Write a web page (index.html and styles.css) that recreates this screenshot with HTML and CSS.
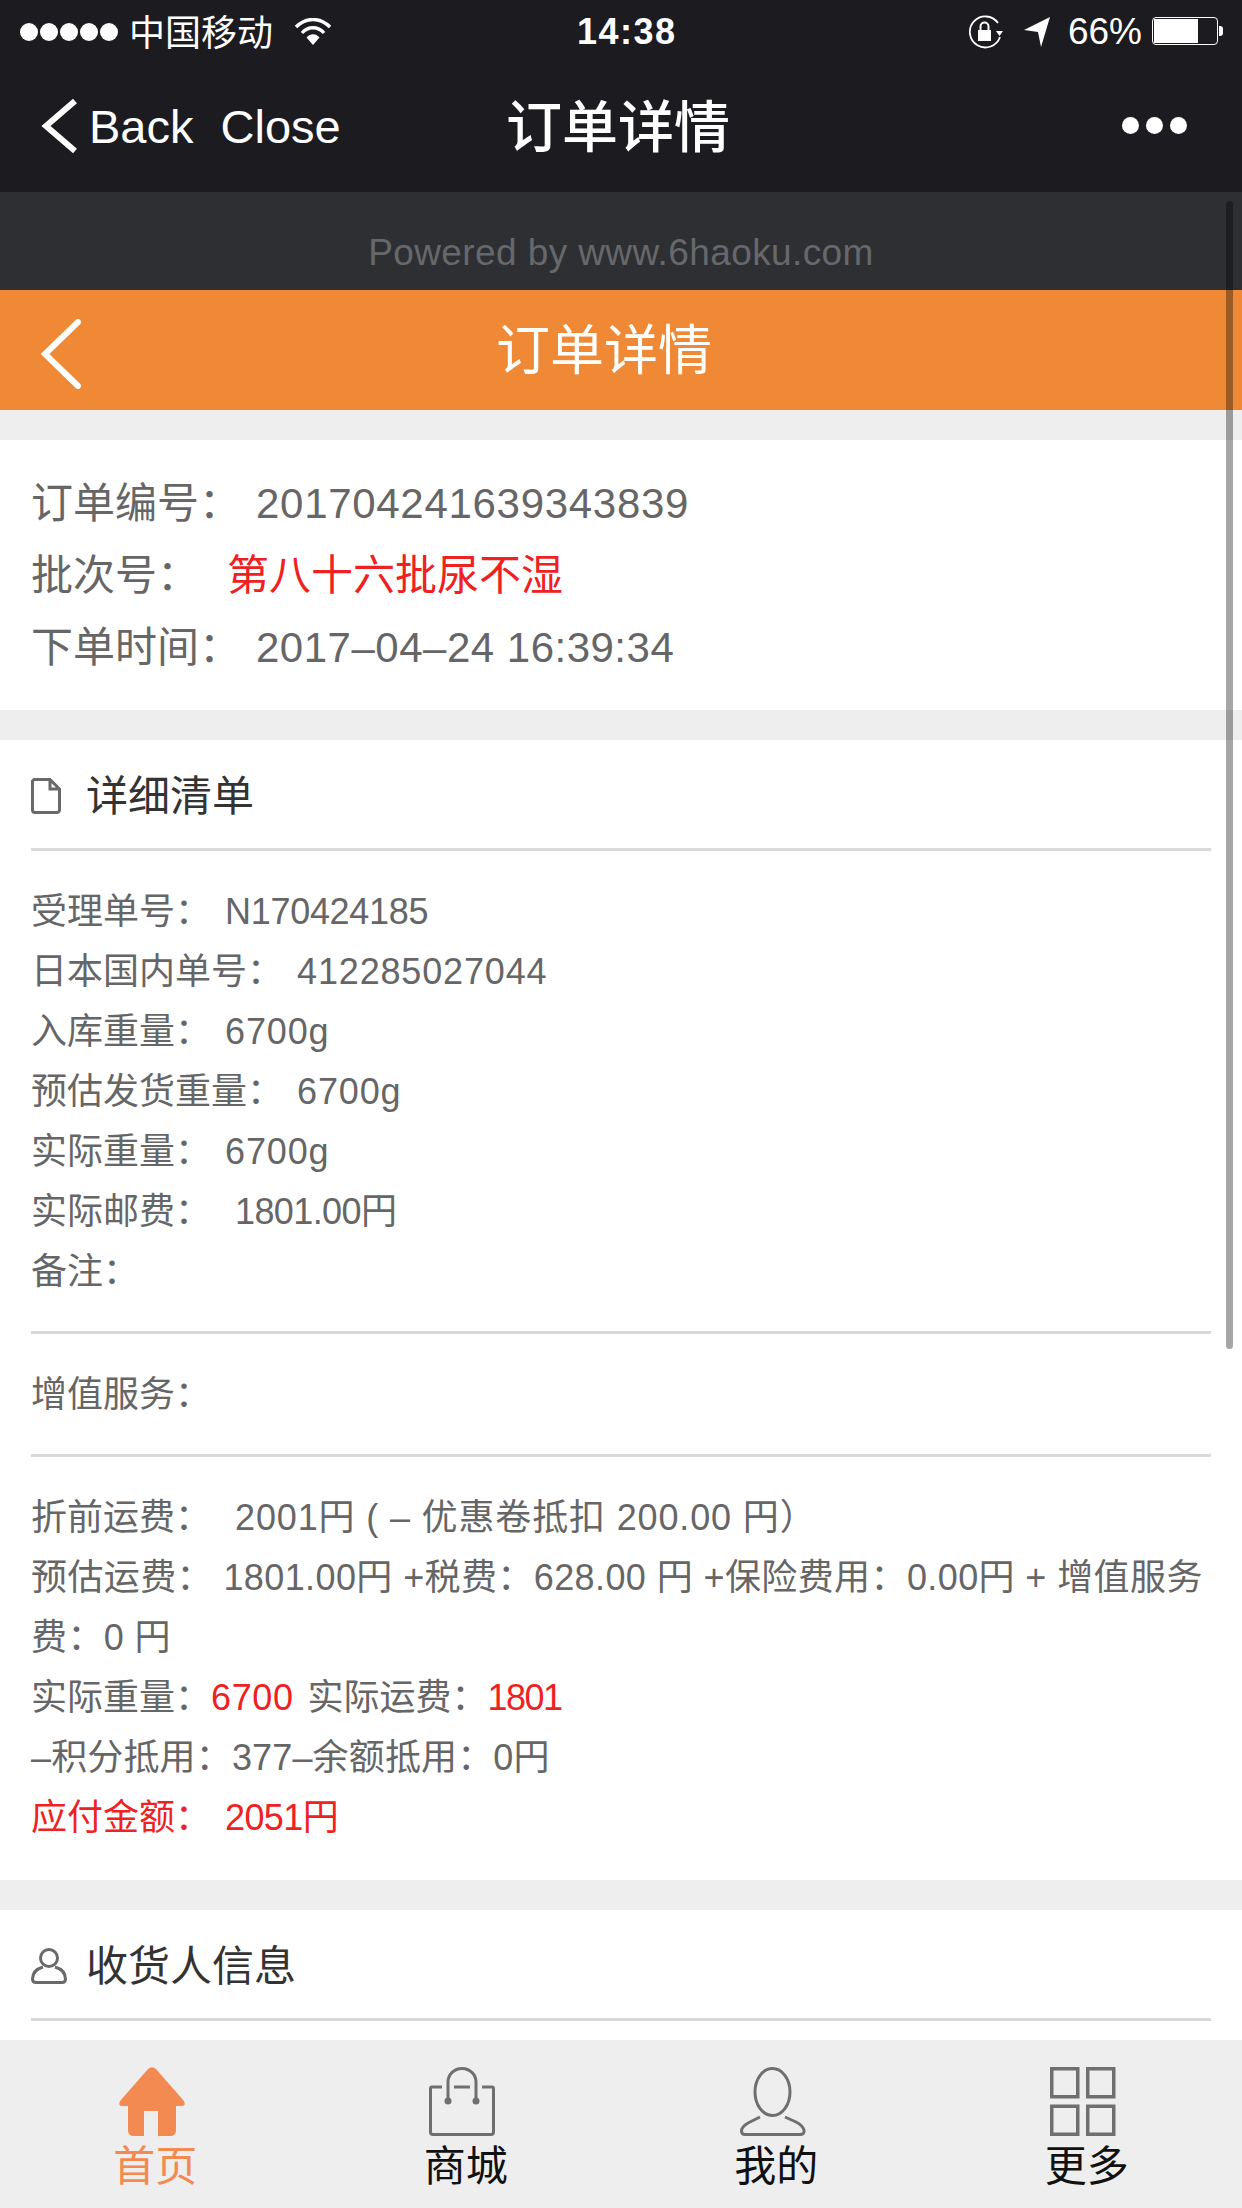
FILE: index.html
```html
<!DOCTYPE html>
<html lang="zh-CN">
<head>
    <meta charset="UTF-8">
    <meta name="viewport" content="width=device-width, initial-scale=1.0">
    <title>订单详情</title>
    <link rel="stylesheet" href="styles.css">
</head>
<body>
<div class="page">
    <!-- phone status bar -->
    <div class="status">
        <div class="status-left">
            <span class="signal"><i></i><i></i><i></i><i></i><i></i></span>
            <span class="carrier">中国移动</span>
            <svg class="wifi" width="36" height="28" viewBox="0 0 36 28">
                <path d="M1 9 C11 -1 25 -1 35 9" fill="none" stroke="#fff" stroke-width="3.4"/>
                <path d="M7 15 C13 8 23 8 29 15" fill="none" stroke="#fff" stroke-width="3.4"/>
                <path d="M11.500 19.500 C15 15 21 15 24.500 19.500 L18 27 Z" fill="#fff"/>
            </svg>
        </div>
        <div class="status-time">14:38</div>
        <div class="status-right">
            <svg width="34" height="36" viewBox="0 0 34 36">
                <path d="M29 9 A15.500 15.500 0 1 0 31 23" fill="none" stroke="#fff" stroke-width="1.800"/>
                <path d="M27 17 H34 L30.500 22 Z" fill="#fff"/>
                <rect x="9" y="16" width="13" height="11" fill="#fff"/>
                <path d="M11.500 16 V12.500 A4 4 0 0 1 19.500 12.500 V16" fill="none" stroke="#fff" stroke-width="2"/>
            </svg>
            <svg class="arrow" width="28" height="32" viewBox="0 0 28 32">
                <path d="M27 1 L1 14 L15 16 L18 31 Z" fill="#fff"/>
            </svg>
            <span class="percent">66%</span>
            <span class="battery"><span class="battery-fill"></span></span>
        </div>
    </div>

    <!-- wechat title bar -->
    <div class="topbar">
        <svg class="topbar-back" width="38" height="56" viewBox="0 0 38 56">
            <path d="M34 3 L5 28 L34 53" fill="none" stroke="#fff" stroke-width="6"/>
        </svg>
        <span class="topbar-link">Back</span>
        <span class="topbar-link close">Close</span>
        <span class="topbar-title">订单详情</span>
        <span class="topbar-more"><i></i><i></i><i></i></span>
    </div>

    <div class="main">
        <div class="powered">Powered by www.6haoku.com</div>

        <div class="header">
            <svg class="header-back" width="40" height="70" viewBox="0 0 40 70">
                <path d="M37 3 L4 35 L37 67" fill="none" stroke="#fff" stroke-width="6" stroke-linecap="round"/>
            </svg>
            <span class="header-title">订单详情</span>
        </div>

        <div class="section order">
            <div class="order-row">订单编号：<span class="value">201704241639343839</span></div>
            <div class="order-row">批次号：<span class="value value-wide red">第八十六批尿不湿</span></div>
            <div class="order-row">下单时间：<span class="value value-date">2017–04–24 16:39:34</span></div>
        </div>

        <div class="section">
            <div class="section-head">
                <span class="head-box">
                    <svg width="30" height="36" viewBox="0 0 30 36">
                        <path d="M3 1.500 H19 L28.500 11 V32 A2.500 2.500 0 0 1 26 34.500 H4 A2.500 2.500 0 0 1 1.500 32 V3 Z M19 1.500 V11 H28.500" fill="none" stroke="#6a6a6a" stroke-width="3"/>
                    </svg>
                </span>
                <span class="head-text">详细清单</span>
            </div>
            <div class="block first">
                <div>受理单号：<span class="val snug">N170424185</span></div>
                <div>日本国内单号：<span class="val">412285027044</span></div>
                <div>入库重量：<span class="val">6700g</span></div>
                <div>预估发货重量：<span class="val">6700g</span></div>
                <div>实际重量：<span class="val">6700g</span></div>
                <div>实际邮费：<span class="val val-wide tight">1801.00円</span></div>
                <div>备注：</div>
            </div>
            <div class="block second">
                <div>增值服务：</div>
            </div>
            <div class="block last">
                <div>折前运费：<span class="val val-wide">2001円 ( – 优惠卷抵扣 200.00 円）</span></div>
                <div class="row-fee">预估运费：&nbsp;1801.00円 +税费：628.00 円 +保险费用：0.00円 + 增值服务费：0 円</div>
                <div>实际重量：<span class="red num">6700</span> <span class="fee-label">实际运费：</span><span class="red narrow">1801</span></div>
                <div class="row-points">–积分抵用：377–余额抵用：0円</div>
                <div class="red">应付金额：<span class="val tight">2051円</span></div>
            </div>
        </div>

        <div class="section section-end">
            <div class="section-head">
                <span class="head-box">
                    <svg width="36" height="36" viewBox="0 0 36 36">
                        <circle cx="18" cy="10" r="8.500" fill="none" stroke="#6a6a6a" stroke-width="3"/>
                        <path d="M12 19 C5 21 1.500 25 1.500 31 C1.500 33.500 3 34.500 5 34.500 H31 C33 34.500 34.500 33.500 34.500 31 C34.500 25 31 21 24 19" fill="none" stroke="#6a6a6a" stroke-width="3"/>
                    </svg>
                </span>
                <span class="head-text">收货人信息</span>
            </div>
        </div>

        <div class="scrollbar"></div>
    </div>

    <!-- bottom tabs -->
    <div class="tabs">
        <div class="tab active">
            <svg width="66" height="69" viewBox="0 0 66 69">
                <path d="M29 2 Q33 -1.500 37 2 L65 34 Q67 39 63 39 H57 V63 Q57 69 51 69 H39 V44 H25 V69 H15 Q9 69 9 63 V39 H3 Q-1 39 1 34 Z" fill="#f28a52"/>
            </svg>
            <span>首页</span>
        </div>
        <div class="tab">
            <svg width="66" height="69" viewBox="0 0 66 69">
                <g fill="none" stroke="#6f6f6f" stroke-width="3">
                    <path d="M13 20 H3 A1.500 1.500 0 0 0 1.500 21.500 V65 A2.500 2.500 0 0 0 4 67.500 H62 A2.500 2.500 0 0 0 64.500 65 V21.500 A1.500 1.500 0 0 0 63 20 H53"/>
                    <path d="M25 20 H41"/>
                    <path d="M19 34 V15 A14 13.500 0 0 1 47 15 V34"/>
                </g>
                <circle cx="19" cy="34" r="3.500" fill="#6f6f6f"/>
                <circle cx="47" cy="34" r="3.500" fill="#6f6f6f"/>
            </svg>
            <span>商城</span>
        </div>
        <div class="tab">
            <svg width="66" height="69" viewBox="0 0 66 69">
                <g fill="none" stroke="#6f6f6f" stroke-width="3">
                    <ellipse cx="32.500" cy="25" rx="17.500" ry="23.500"/>
                    <path d="M20 50 L8 56 C3 59 1.500 62 1.500 64 C1.500 66.500 3 67.500 5 67.500 H60 C63 67.500 64.500 66 64 63 C63 60 60 57 56 55 L45 50"/>
                </g>
            </svg>
            <span>我的</span>
        </div>
        <div class="tab">
            <svg width="66" height="69" viewBox="0 0 66 69">
                <g fill="none" stroke="#6f6f6f" stroke-width="3.500">
                    <rect x="1.750" y="1.750" width="26" height="28"/>
                    <rect x="37.750" y="1.750" width="26" height="28"/>
                    <rect x="1.750" y="39.250" width="26" height="28"/>
                    <rect x="37.750" y="39.250" width="26" height="28"/>
                </g>
            </svg>
            <span>更多</span>
        </div>
    </div>
</div>
</body>
</html>
```

FILE: styles.css
```css
body {
    margin: 0;
    font-family: "Liberation Sans", "Noto Sans CJK SC", sans-serif;
    color: #666;
}

.page {
    width: 1242px;
    height: 2208px;
    display: flex;
    flex-direction: column;
    overflow: hidden;
    background: #eee;
}

/* status bar */
.status {
    height: 64px;
    flex: none;
    display: flex;
    justify-content: space-between;
    align-items: center;
    padding: 0 20px;
    background: #1b1b20;
    color: #fff;
    position: relative;
}

.status-left,
.status-right {
    display: flex;
    align-items: center;
}

.signal {
    display: flex;
    gap: 2px;
}

.signal i {
    width: 18px;
    height: 18px;
    border-radius: 50%;
    background: #fff;
}

.carrier {
    font-size: 36px;
    margin-left: 11px;
    margin-bottom: 4px;
}

.wifi {
    margin-left: 22px;
}

.status-time {
    position: absolute;
    left: 577px;
    font-size: 36px;
    font-weight: bold;
    letter-spacing: 1.5px;
}

.arrow {
    margin-left: 20px;
}

.percent {
    font-size: 37px;
    margin-left: 17px;
}

.battery {
    width: 66px;
    height: 28px;
    margin-left: 10px;
    margin-right: 4px;
    margin-bottom: 3px;
    border: 1px solid #fff;
    border-radius: 4px;
    padding: 1px;
    position: relative;
    box-sizing: border-box;
}

.battery::after {
    content: "";
    position: absolute;
    right: -6px;
    top: 8px;
    width: 4px;
    height: 10px;
    background: #fff;
    border-radius: 0 3px 3px 0;
}

.battery-fill {
    display: block;
    width: 44px;
    height: 100%;
    background: #fff;
}

/* title bar */
.topbar {
    height: 128px;
    flex: none;
    display: flex;
    align-items: center;
    padding: 0 55px 4px 41px;
    box-sizing: border-box;
    background: #1b1b20;
    color: #fff;
    position: relative;
}

.topbar-link {
    font-size: 47px;
    margin-left: 10px;
}

.topbar-link.close {
    margin-left: 27px;
}

.topbar-title {
    position: absolute;
    left: 506px;
    margin-bottom: 8px;
    font-size: 56px;
    font-weight: 500;
}

.topbar-more {
    margin-left: auto;
    margin-bottom: 2px;
    display: flex;
    gap: 7px;
}

.topbar-more i {
    width: 17px;
    height: 17px;
    border-radius: 50%;
    background: #fff;
}

/* content */
.main {
    flex: 1;
    min-height: 0;
    overflow: hidden;
    position: relative;
}

.powered {
    height: 98px;
    padding-top: 23px;
    box-sizing: border-box;
    background: #2e2f32;
    color: #66686b;
    font-size: 37px;
    letter-spacing: 0.4px;
    line-height: 75px;
    text-align: center;
}

.header {
    height: 120px;
    display: flex;
    align-items: center;
    background: #ef8936;
    padding-left: 41px;
    position: relative;
}

.header-back {
    margin-top: 8px;
}

.header-title {
    position: absolute;
    left: 496px;
    margin-bottom: 8px;
    font-size: 54px;
    color: #fff;
}

.section {
    margin-top: 30px;
    padding: 0 31px;
    background: #fff;
}

.section-end {
    padding-bottom: 40px;
}

.order {
    padding-top: 28px;
    padding-bottom: 26px;
    font-size: 42px;
}

.order-row {
    line-height: 72px;
}

.value {
    margin-left: 15px;
    letter-spacing: 0.7px;
}

.value-date {
    letter-spacing: 0.5px;
}

.value-wide {
    margin-left: 28px;
    letter-spacing: 0;
}

.red {
    color: #ee2222;
}

.section-head {
    height: 108px;
    display: flex;
    align-items: center;
    border-bottom: 3px solid #d9d9d9;
    font-size: 42px;
    color: #333;
}

.head-box {
    width: 55px;
    flex: none;
    display: flex;
    margin-top: 3px;
}

.head-text {
    margin-bottom: 4px;
}

.block {
    font-size: 36px;
    line-height: 60px;
    border-bottom: 3px solid #d9d9d9;
}

.block.first {
    padding: 31px 0 29px;
}

.block.second {
    padding: 31px 0 29px;
}

.block.last {
    padding: 31px 0 32px;
    border-bottom: none;
}

.val {
    margin-left: 14px;
    letter-spacing: 0.85px;
}

.val-wide {
    margin-left: 24px;
}

.val.snug {
    letter-spacing: -0.3px;
}

.val.tight {
    letter-spacing: -0.6px;
}

.row-fee {
    letter-spacing: 0.4px;
}

.row-points {
    letter-spacing: 0.15px;
}

.num {
    letter-spacing: 0.6px;
}

.fee-label {
    margin-left: 4px;
}

.narrow {
    letter-spacing: -1.5px;
}

.scrollbar {
    position: absolute;
    top: 9px;
    right: 9px;
    width: 7px;
    height: 1148px;
    border-radius: 4px;
    background: rgba(0, 0, 0, 0.35);
}

/* tabs */
.tabs {
    height: 168px;
    flex: none;
    display: flex;
    background: #eee;
}

.tab {
    flex: 1;
    display: flex;
    flex-direction: column;
    align-items: center;
    padding-top: 27px;
    box-sizing: border-box;
    font-size: 42px;
    line-height: 62px;
    color: #111;
}

.tab svg {
    display: block;
    margin-right: 7px;
}

.tab.active {
    color: #f28a52;
}
```
